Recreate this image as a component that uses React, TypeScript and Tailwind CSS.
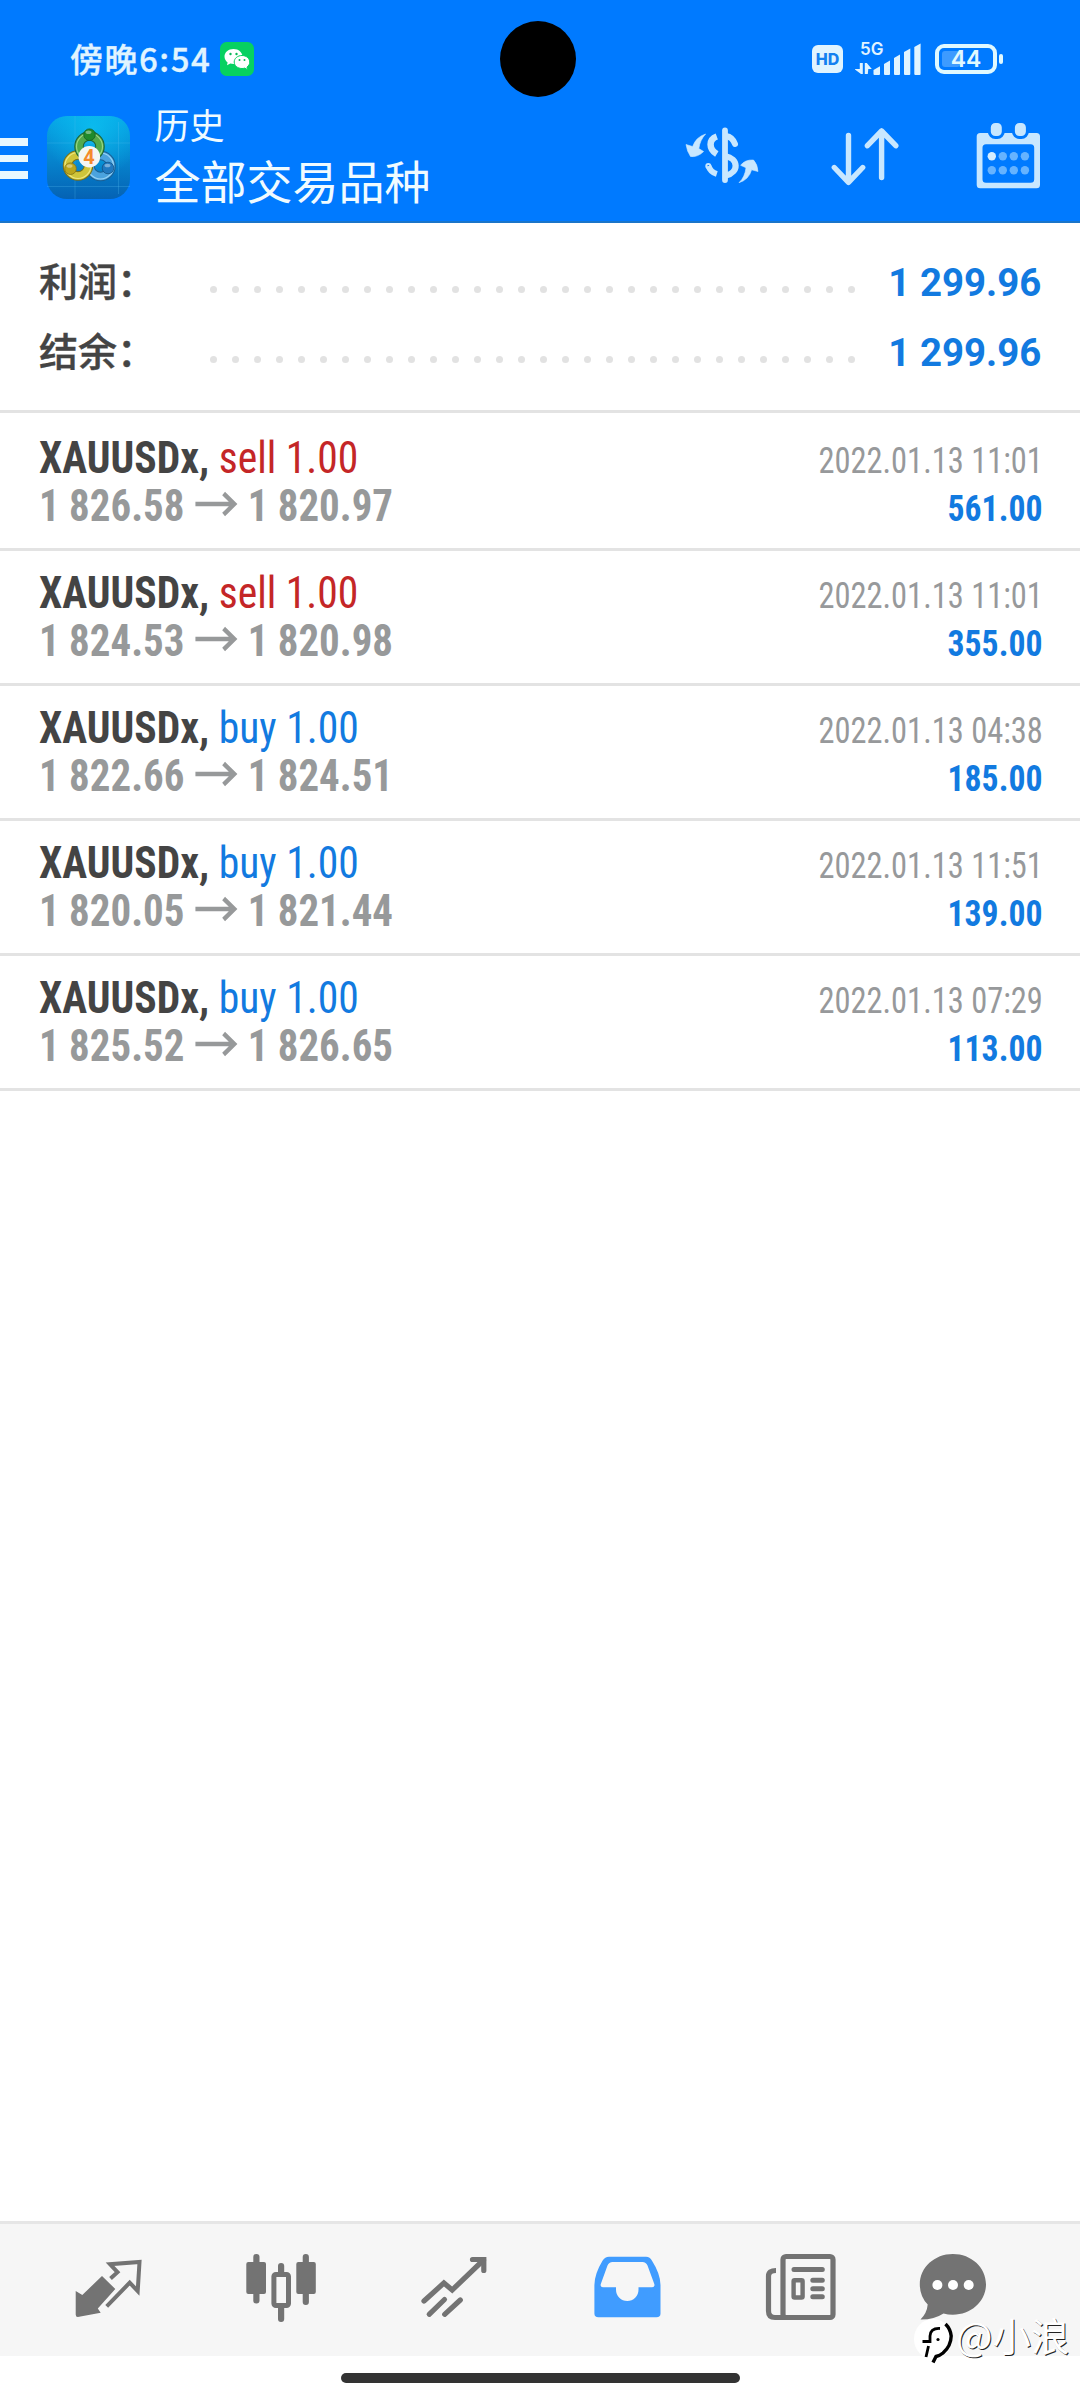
import { ReactNode } from 'react'

interface Deal {
  side: 'buy' | 'sell'
  open: string
  close: string
  time: string
  profit: string
}

const DEALS: Deal[] = [
  { side: 'sell', open: '1 826.58', close: '1 820.97', time: '2022.01.13 11:01', profit: '561.00' },
  { side: 'sell', open: '1 824.53', close: '1 820.98', time: '2022.01.13 11:01', profit: '355.00' },
  { side: 'buy',  open: '1 822.66', close: '1 824.51', time: '2022.01.13 04:38', profit: '185.00' },
  { side: 'buy',  open: '1 820.05', close: '1 821.44', time: '2022.01.13 11:51', profit: '139.00' },
  { side: 'buy',  open: '1 825.52', close: '1 826.65', time: '2022.01.13 07:29', profit: '113.00' },
]

const SIDE_COLOR: Record<Deal['side'], string> = {
  sell: 'text-[#c42627]',
  buy:  'text-[#127ae0]',
}

const cjk = "font-['Noto_Sans_CJK_SC',sans-serif]"
const roboto = "font-['Roboto',sans-serif]"

function WeChatIcon() {
  return (
    <svg width="34" height="34" viewBox="0 0 34 34">
      <rect width="34" height="34" rx="6.5" fill="#07d160" />
      <path d="M13.5 7C8.3 7 4.5 10.4 4.5 14.6c0 2.4 1.2 4.4 3.1 5.8L7 23.2l3.3-1.7c1 .3 2.1.5 3.2.5 5.2 0 9-3.3 9-7.4S18.7 7 13.5 7z" fill="#fff" />
      <path d="M22 13.5c-4.4 0-7.8 2.9-7.8 6.5S17.6 26.5 22 26.5c1 0 1.9-.1 2.7-.4l2.9 1.6-.6-2.6c1.8-1.2 2.7-3 2.7-5 0-3.7-3.3-6.6-7.7-6.6z" fill="#fff" stroke="#07d160" strokeWidth="1" />
      <g fill="#07b856">
        <circle cx="10.5" cy="12" r="1.2" />
        <circle cx="16.5" cy="12" r="1.2" />
        <circle cx="19.5" cy="18" r="1" />
        <circle cx="24.5" cy="18" r="1" />
      </g>
    </svg>
  )
}

function SignalBars() {
  return (
    <svg width="70" height="36" viewBox="0 0 70 36" fill="#e0f4ff">
      <path d="M4.8 21h3v11H6L-.5 27h5.3zM9.8 32V21h2l5 6h-3.5l-.5 5z" />
      <path d="M18.5 28l6.5-3.7V32a1 1 0 0 1-1 1h-4.5a1 1 0 0 1-1-1z" />
      <path d="M29 22l6-3.5V32a1 1 0 0 1-1 1h-4a1 1 0 0 1-1-1z" />
      <path d="M39 16l6-3.5V32a1 1 0 0 1-1 1h-4a1 1 0 0 1-1-1z" />
      <path d="M49 10l6.3-3.5V32a1 1 0 0 1-1 1H50a1 1 0 0 1-1-1z" />
      <path d="M59.3 5l6.3-3.5V32a1 1 0 0 1-1 1h-4.3a1 1 0 0 1-1-1z" />
    </svg>
  )
}

function AppLogo() {
  return (
    <svg width="83" height="83" viewBox="0 0 83 83">
      <defs>
        <linearGradient id="logoBg" x1="0" y1="0" x2="0" y2="1">
          <stop offset="0" stopColor="#06a6e6" />
          <stop offset="0.5" stopColor="#0686cf" />
          <stop offset="1" stopColor="#0562b4" />
        </linearGradient>
        <radialGradient id="logoGlow" cx="0.55" cy="0.15" r="0.6">
          <stop offset="0" stopColor="#0cc4f2" stopOpacity="0.75" />
          <stop offset="1" stopColor="#0cc4f2" stopOpacity="0" />
        </radialGradient>
      </defs>
      <rect width="83" height="83" rx="20" fill="url(#logoBg)" />
      <rect width="83" height="83" rx="20" fill="url(#logoGlow)" />
      <path d="M28 0v83M71.5 6v72M0 27h83M0 70.5h83" stroke="#5cc4f4" strokeOpacity="0.25" strokeWidth="1" />
      <g fill="none">
        <circle cx="53.5" cy="50" r="10.5" stroke="#1b5f93" strokeWidth="9.5" />
        <circle cx="53.5" cy="50" r="10.5" stroke="#4ba3de" strokeWidth="7.5" />
        <circle cx="53.5" cy="50" r="13" stroke="#9ad4f5" strokeWidth="1.2" />
        <circle cx="31" cy="49.5" r="10.5" stroke="#77701c" strokeWidth="9.5" />
        <circle cx="31" cy="49.5" r="10.5" stroke="#cfc53a" strokeWidth="7.5" />
        <circle cx="31" cy="49.5" r="13" stroke="#eee681" strokeWidth="1.2" />
        <circle cx="42.5" cy="30.5" r="10.5" stroke="#1e6238" strokeWidth="9.5" />
        <circle cx="42.5" cy="30.5" r="10.5" stroke="#52a94a" strokeWidth="7.5" />
        <circle cx="42.5" cy="30.5" r="13" stroke="#98d684" strokeWidth="1.2" />
      </g>
      <circle cx="42.5" cy="18.7" r="5.8" fill="#1f8a2b" stroke="#155f25" strokeWidth="0.8" />
      <circle cx="23.5" cy="52.7" r="5.8" fill="#bba61c" stroke="#857416" strokeWidth="0.8" />
      <circle cx="61" cy="52" r="5.8" fill="#2179c0" stroke="#145488" strokeWidth="0.8" />
      <g fill="#fff" fillOpacity="0.4">
        <ellipse cx="41.5" cy="16.2" rx="3" ry="1.8" />
        <ellipse cx="22.5" cy="50" rx="3" ry="1.8" />
        <ellipse cx="60.5" cy="49.5" rx="3" ry="1.8" />
      </g>
      <circle cx="42.3" cy="40.7" r="10.8" fill="#f4f6f4" />
      <text x="42" y="47.7" textAnchor="middle" fontSize="20" fontWeight="700" fontFamily="Roboto, sans-serif" fill="#f58a2c">4</text>
    </svg>
  )
}

function CurrencyIcon() {
  return (
    <svg width="90" height="80" viewBox="0 0 90 80">
      <g fill="none" stroke="#c8e7ff">
        <path d="M45 15.5v49.5" strokeWidth="5.8" strokeLinecap="round" />
        <path d="M36.8 21.5C28.5 24.5 28.5 34 36.8 39" strokeWidth="6.5" />
        <path d="M46 21q6.500 1 9 8" strokeWidth="6" strokeLinecap="round" />
        <path d="M45 41C59 43.5 59 57.5 46 60.5" strokeWidth="6.2" />
        <path d="M28.5 51q1.8 6 8.3 8" strokeWidth="6" />
        <circle cx="28.3" cy="51" r="1" strokeWidth="4" />
      </g>
      <g fill="#c8e7ff" stroke="#c8e7ff" strokeWidth="0.6" strokeLinejoin="round">
        <path d="M25.6 19Q16 22 12.6 31.5L6 29.5Q7 36.5 10.5 41.5Q17.5 42.5 23.6 36.5L18.8 33.6Q20 25 25.6 19z" />
        <path d="M59 67.7Q65 62 66 52.7L60.6 50.3Q65 44.5 73.5 45Q77.5 49 78 56.5L71.6 54.8Q69 64.5 59 67.7z" />
      </g>
    </svg>
  )
}

function SortIcon() {
  return (
    <svg width="80" height="76" viewBox="0 0 80 76" fill="none" stroke="#c8e7ff" strokeWidth="5.4" strokeLinecap="round" strokeLinejoin="round">
      <path d="M23.5 15.5V62M9.3 47.5L23.5 62.3 37.7 47.5" />
      <path d="M56.6 57.5V11M42.4 25.7L56.6 11l14.2 14.7" />
    </svg>
  )
}

function CalendarIcon() {
  return (
    <svg width="76" height="80" viewBox="0 0 76 80">
      <path fillRule="evenodd" fill="#c8e7ff" d="M10.2 18h56.3q3.5 0 3.5 3.5v48.3q0 3.5-3.5 3.5H10.2q-3.5 0-3.5-3.5V21.5q0-3.5 3.5-3.5zM16 29.3q-3.5 0-3.5 3.5v31.4q0 3.5 3.5 3.5h44.7q3.5 0 3.5-3.5V32.8q0-3.5-3.5-3.5z" />
      <g fill="#c8e7ff" stroke="#007aff" strokeWidth="3">
        <rect x="19.3" y="6.5" width="14" height="16" rx="6" />
        <rect x="43.4" y="6.5" width="14" height="16" rx="6" />
      </g>
      {[41.3, 55.3].map((y, row) =>
        [21.8, 32.8, 43.8, 54.9].map((x, col) => (
          <circle key={`${x}-${y}`} cx={x} cy={y} r="4.2" fill={row === 0 && col === 0 ? '#d6eeff' : '#66b3ff'} />
        ))
      )}
    </svg>
  )
}

function NavIcon({ children }: { children: ReactNode }) {
  return (
    <svg width="72" height="72" viewBox="0 0 72 72" fill="#737373" className="shrink-0">
      {children}
    </svg>
  )
}

function StatusBar() {
  return (
    <div className="flex h-[100px] items-start justify-between pt-[42px] pr-[77px] pl-[70px]">
      <div className="flex items-start gap-[9px]">
        <span className={`${cjk} -mt-px h-[34px] text-[33px] leading-[34px] font-medium tracking-[1.5px] whitespace-nowrap text-[#e0f4ff] [-webkit-text-stroke:0.3px_#e0f4ff]`}>傍晚6:54</span>
        <WeChatIcon />
      </div>
      <div className="flex items-start">
        <span className="mt-[3px] flex h-[28px] w-[31px] items-center justify-center rounded-[6px] bg-[#e0f4ff] font-['Inter',sans-serif] text-[16px] leading-none font-extrabold text-[#1480f0]">HD</span>
        <div className="relative ml-[12px]">
          <span className="absolute top-[-2px] left-[5px] font-['Inter',sans-serif] text-[17px] leading-[18px] font-semibold text-[#e0f4ff]">5G</span>
          <SignalBars />
        </div>
        <div className="mt-[2px] ml-[10px] flex items-center gap-[2px]">
          <div className="relative flex h-[30px] w-[62px] items-center justify-center rounded-[9px] border-4 border-[#e0f9ff]">
            <div className="absolute top-[3px] left-[3px] h-[16px] w-[18px] rounded-[3px] bg-[#3d9bff]" />
            <span className="relative font-['Inter',sans-serif] text-[23px] leading-none font-semibold text-[#e0f9ff]">44</span>
          </div>
          <div className="h-[10px] w-[4px] rounded-[2px] bg-[#e0f9ff]" />
        </div>
      </div>
    </div>
  )
}

function Header() {
  return (
    <header className="relative h-[223px] border-b-2 border-[#1a75c9] bg-[#007aff]">
      <StatusBar />
      <div className="absolute top-[21px] left-[500px] h-[76px] w-[76px] rounded-full bg-black" />
      <div className="flex items-start">
        <div className="mt-[38px] flex w-[28px] flex-col gap-[9px]">
          <div className="h-[7.5px] bg-[#e8f8ff]" />
          <div className="h-[7.5px] bg-[#e8f8ff]" />
          <div className="h-[7.5px] bg-[#e8f8ff]" />
        </div>
        <div className="mt-[16px] ml-[18.5px]">
          <AppLogo />
        </div>
        <div className={`${cjk} ml-[25px] flex w-[500px] flex-col text-[#f0fbff]`}>
          <span className="mt-[4px] text-[35px] leading-[40px]">历史</span>
          <span className="mt-[8px] text-[46px] leading-[54px]">全部交易品种</span>
        </div>
        <div className="mt-[15px] ml-[25.5px] flex">
          <CurrencyIcon />
          <div className="mt-[5px] ml-[55px]">
            <SortIcon />
          </div>
          <div className="ml-[65px]">
            <CalendarIcon />
          </div>
        </div>
      </div>
    </header>
  )
}

function SummaryRow({ label, value }: { label: string; value: string }) {
  return (
    <div className="flex h-[70px] items-center pr-[39px] pl-[39px]">
      <span className={`${cjk} -mt-[7px] w-[171px] text-[39px] leading-[60px] font-medium text-[#444] [-webkit-text-stroke:0.4px_#444]`}>{label}</span>
      <div className="mt-[14px] flex gap-[15px]">
        {Array.from({ length: 30 }, (_, i) => (
          <span key={i} className="size-[7px] rounded-full bg-[#e2e2e2]" />
        ))}
      </div>
      <span className={`${roboto} mt-[2px] ml-auto origin-right scale-x-[0.985] text-[39px] leading-[60px] font-bold whitespace-nowrap text-[#127ae0]`}>{value}</span>
    </div>
  )
}

function DealRow({ deal }: { deal: Deal }) {
  return (
    <div className={`${roboto} flex h-[135px] justify-between border-b-[3px] border-[#e3e3e3] pt-[18px] pr-[38px] pl-[39px] [font-stretch:75%]`}>
      <div className="text-[44px] leading-[48px] whitespace-nowrap">
        <p className="origin-left scale-x-[0.945]">
          <span className="font-bold text-[#444]">XAUUSDx,</span>{' '}
          <span className={SIDE_COLOR[deal.side]}>{deal.side} 1.00</span>
        </p>
        <p className="flex origin-left scale-x-[0.93] items-center font-bold text-[#97999a]">
          {deal.open}
          <svg width="46" height="26" viewBox="0 0 46 26" fill="none" stroke="#97999a" strokeWidth="4.5" className="mr-[10px] ml-[12px] -mt-[5px]">
            <path d="M0 13h43M30.5 2.5L42 13 30.5 23.5" />
          </svg>
          {deal.close}
        </p>
      </div>
      <div className="flex flex-col items-end pt-[3px] whitespace-nowrap">
        <span className="-mr-px origin-right scale-x-[0.877] text-[37px] leading-[48px] text-[#97999b]">{deal.time}</span>
        <span className="origin-right scale-x-[0.935] text-[36px] leading-[48px] font-bold text-[#127ae0]">{deal.profit}</span>
      </div>
    </div>
  )
}

function TabBar() {
  return (
    <nav className="flex h-[135px] items-start border-t-[3px] border-[#e6e6e6] bg-[#f6f6f6] pt-[28px] pl-[72px]">
      {/* quotes */}
      <NavIcon>
        <path d="M30 24L43.3 37 25.8 56.5l2.9 4.3L5.8 65Q3.7 65 3.7 62.5V39l6.6 4z" />
        <path d="M38.5 26.5l7-6.3-7.5-8L67.5 10l-1.8 29-8-8.3-23 23.7" fill="none" stroke="#737373" strokeWidth="4" />
      </NavIcon>
      <div className="w-[101px]" />
      {/* charts */}
      <NavIcon>
        <rect x="8.3" y="2" width="6.2" height="49.5" rx="3" />
        <rect x="1.3" y="10" width="19.7" height="32" rx="2" />
        <rect x="33" y="11" width="6.2" height="18" rx="3" />
        <rect x="33" y="52" width="6.2" height="18" rx="3" />
        <rect x="28.9" y="22.5" width="14.6" height="31" rx="2" fill="#f6f6f6" stroke="#737373" strokeWidth="5" />
        <rect x="57.7" y="2" width="6.2" height="51" rx="3" />
        <rect x="51.3" y="10" width="19.5" height="32" rx="2" />
      </NavIcon>
      <div className="w-[101px]" />
      {/* trade */}
      <NavIcon>
        <g fill="none" stroke="#737373" strokeWidth="5.2" strokeLinecap="round">
          <path d="M6 49L25.9 31l8.3 7L65.5 8" />
          <path d="M54.5 7.5h11.3V18.5" />
          <path d="M11.2 62.3L26.5 47.5M26.7 62.3L42.3 48" />
        </g>
      </NavIcon>
      <div className="w-[102px]" />
      {/* history */}
      <NavIcon>
        <path
          fill="#409cff"
          fillRule="evenodd"
          d="M17 4.7h37q4 0 6 4Q68.5 22 68.5 33v28.5q0 3.8-4 3.8H6.4q-4 0-4-3.8V33Q2.4 22 10.5 8.7q2.5-4 6.5-4zM20.5 10q-3.5 0-5 3.5L8.8 32q-1 3.3 2.5 3.3H24v2.5a11.25 11.25 0 0 0 22.5 0v-2.500h13.3q3.5 0 2.5-3.3L55.5 13.5q-1.5-3.5-5-3.5z"
        />
      </NavIcon>
      <div className="w-[101px]" />
      {/* news */}
      <NavIcon>
        <g fill="none" stroke="#737373">
          <rect x="18" y="4.5" width="50" height="61" rx="3" strokeWidth="5.2" />
          <path d="M11 18.5Q3.5 18.5 3.5 24v35q0 6.5 6.5 6.5h12" strokeWidth="5.2" />
          <rect x="28.6" y="28.2" width="9" height="17.3" rx="1" strokeWidth="4.4" />
          <path d="M29 17.5h28.3M47.8 28.3h9.5M47.8 36.7h9.5M47.8 44.8h9.5" strokeWidth="5" strokeLinecap="round" />
        </g>
      </NavIcon>
      <div className="w-[80px]" />
      {/* messages */}
      <NavIcon>
        <path d="M35.9 2C54.5 2 69 15.5 69 32.3S54.5 62.7 35.9 62.7q-5 0-9.4-1.2Q17 67.7 3.5 67.5 10 61 10.7 52.5 2.8 44.5 2.8 32.3C2.8 15.5 17.5 2 35.9 2z" />
        <g fill="#fff">
          <circle cx="20.4" cy="33" r="5" />
          <circle cx="36" cy="33" r="5" />
          <circle cx="51.7" cy="33" r="5" />
        </g>
      </NavIcon>
    </nav>
  )
}

function Watermark() {
  return (
    <div className="absolute top-[2318px] left-[912px] flex items-start">
      <svg width="44" height="48" viewBox="0 0 44 48" className="shrink-0">
        <ellipse cx="21" cy="21" rx="19" ry="20" fill="#fff" />
        <path d="M33.5 6Q38.5 11 39.2 18 39 28 31 35 28 37.5 24 38.5L21 44.5" fill="none" stroke="#000" strokeWidth="3.4" />
        <path d="M28 10.5Q18.5 10 18 18v5.5h-7.5M16.5 28L14 39" fill="none" stroke="#000" strokeWidth="2.8" />
        <circle cx="26" cy="21.5" r="1.6" />
      </svg>
      <span className={`${cjk} -mt-[4px] text-[38.5px] leading-[40px] whitespace-nowrap text-white [text-shadow:1px_1px_0.5px_#222]`}>@小浪</span>
    </div>
  )
}

export default function App() {
  return (
    <div className="relative flex h-[2400px] w-[1080px] flex-col overflow-hidden bg-white">
      <Header />
      <section className="h-[190px] border-b-[3px] border-[#e3e3e3] pt-[24px]">
        <SummaryRow label="利润：" value="1 299.96" />
        <SummaryRow label="结余：" value="1 299.96" />
      </section>
      <main className="flex-1 pt-[3px]">
        {DEALS.map((deal) => (
          <DealRow key={deal.open} deal={deal} />
        ))}
      </main>
      <TabBar />
      <div className="flex h-[44px] justify-center pt-[17px]">
        <div className="h-[10px] w-[399px] rounded-full bg-[#333]" />
      </div>
      <Watermark />
    </div>
  )
}
